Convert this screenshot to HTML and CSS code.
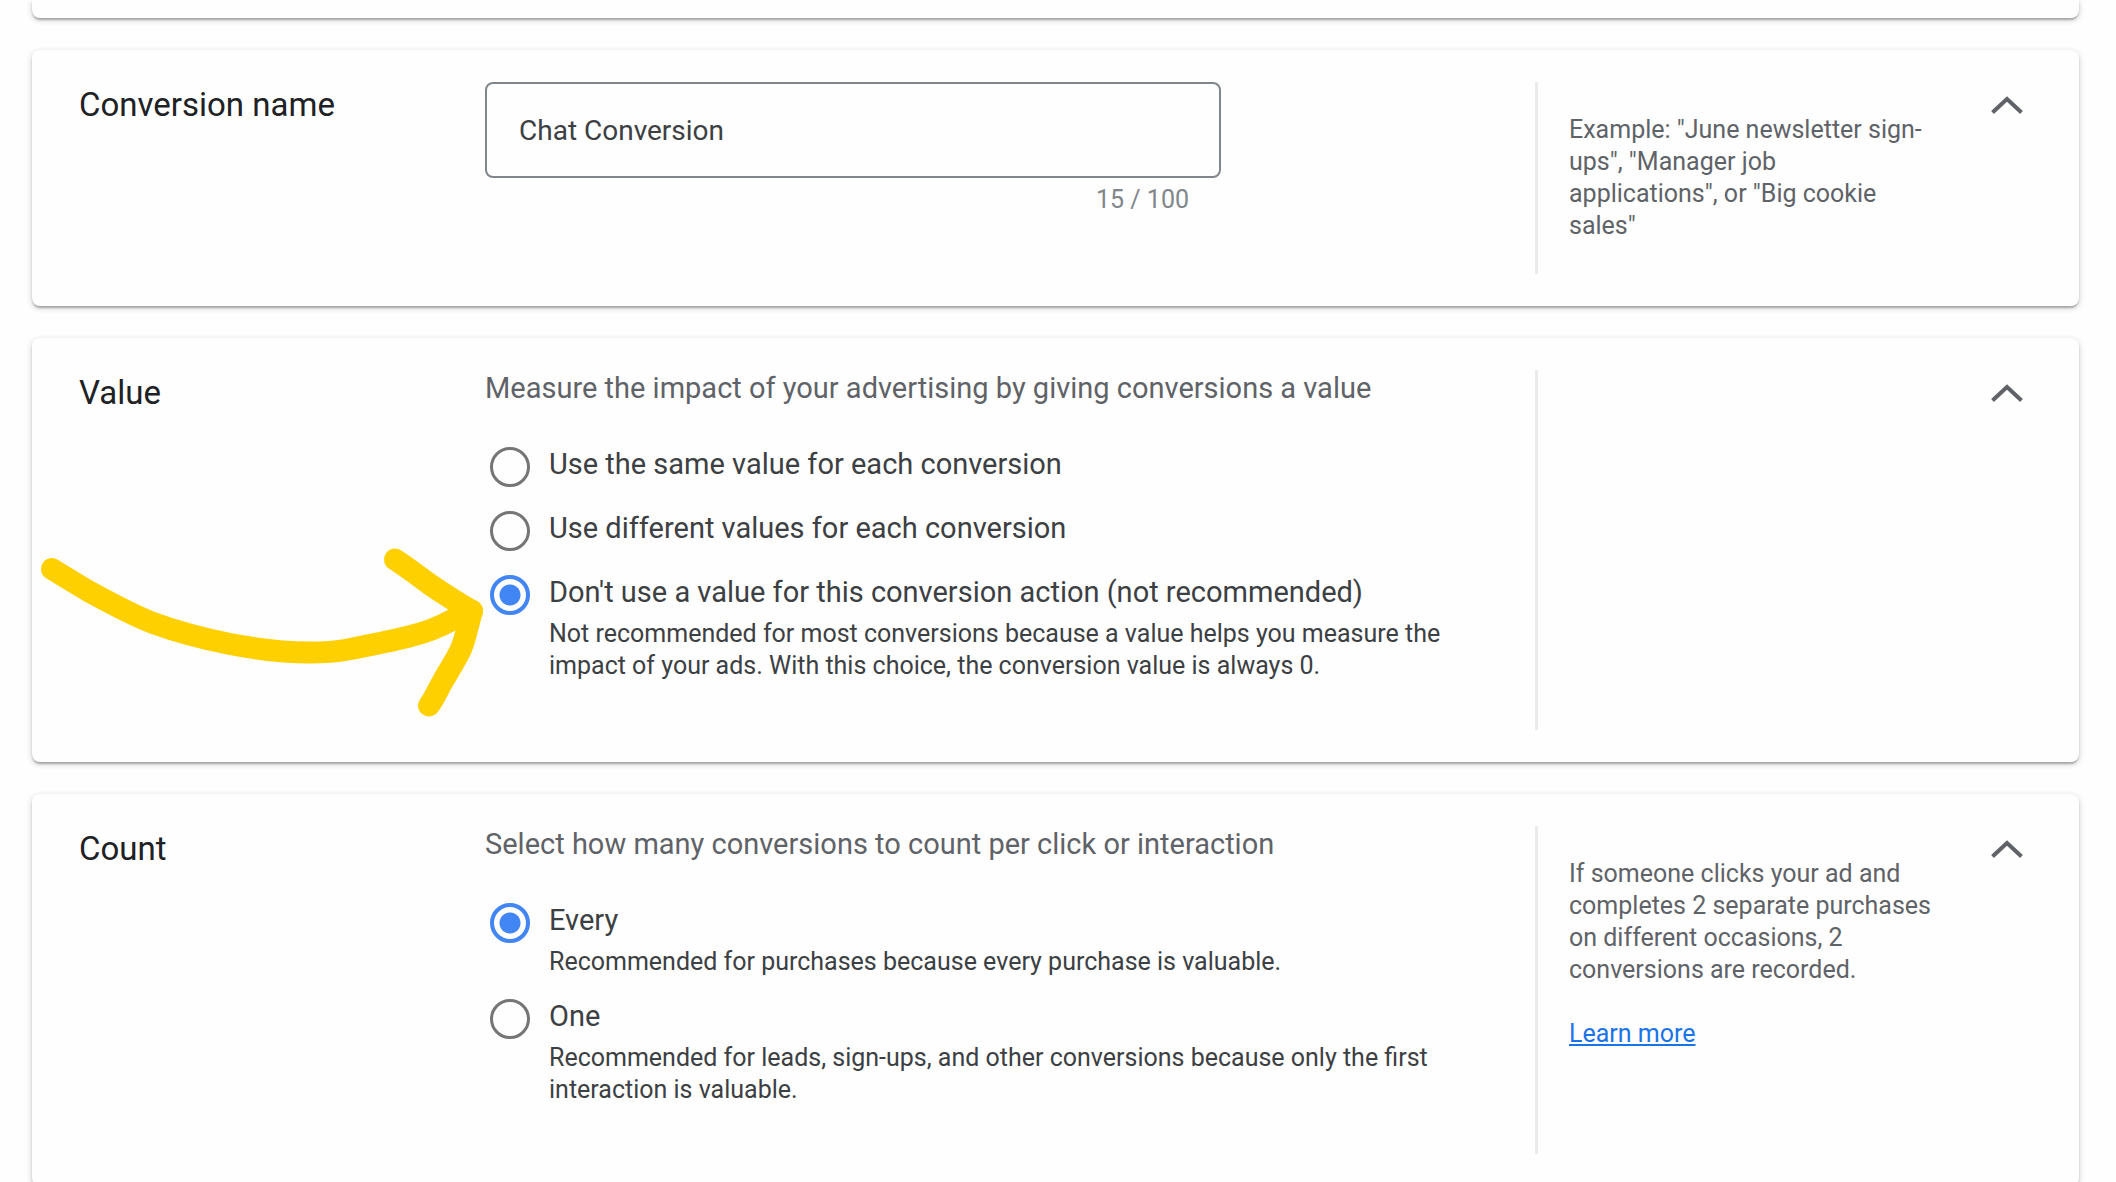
FILE: index.html
```html
<!DOCTYPE html>
<html lang="en">
<head>
    <meta charset="UTF-8">
    <meta name="viewport" content="width=device-width, initial-scale=1.0">
    <title>Conversion action settings</title>
    <link rel="stylesheet" href="styles.css">
</head>
<body>
    <main class="settings">
        <div class="card card-previous"></div>

        <!-- Conversion name -->
        <section class="card">
            <h2 class="card-title"><label for="conversionName">Conversion name</label></h2>
            <div class="card-body">
                <div class="name-field">
                    <input type="text" id="conversionName" class="name-input" value="Chat Conversion" maxlength="100">
                    <span class="name-counter">15 / 100</span>
                </div>
            </div>
            <aside class="card-aside">
                <p class="help-text">Example: "June newsletter sign-ups", "Manager job<br>applications", or "Big cookie<br>sales"</p>
                <button type="button" class="collapse-button" aria-label="Collapse">
                    <svg class="chevron" viewBox="0 0 48 48"><polyline points="9.5,30.5 24,17 38.5,30.5"/></svg>
                </button>
            </aside>
        </section>

        <!-- Value -->
        <section class="card">
            <h2 class="card-title">Value</h2>
            <div class="card-body">
                <p class="card-intro">Measure the impact of your advertising by giving conversions a value</p>
                <div class="options">
                    <label class="option">
                        <input type="radio" name="value" class="option-radio">
                        <span class="option-label">Use the same value for each conversion</span>
                    </label>
                    <label class="option">
                        <input type="radio" name="value" class="option-radio">
                        <span class="option-label">Use different values for each conversion</span>
                    </label>
                    <label class="option">
                        <input type="radio" name="value" class="option-radio" checked>
                        <span class="option-text">
                            <span class="option-label">Don't use a value for this conversion action (not recommended)</span>
                            <span class="option-hint">Not recommended for most conversions because a value helps you measure the impact of your ads. With this choice, the conversion value is always 0.</span>
                        </span>
                    </label>
                </div>
            </div>
            <aside class="card-aside">
                <p class="help-text"></p>
                <button type="button" class="collapse-button" aria-label="Collapse">
                    <svg class="chevron" viewBox="0 0 48 48"><polyline points="9.5,30.5 24,17 38.5,30.5"/></svg>
                </button>
            </aside>
            <svg class="arrow" viewBox="40 540 450 180" aria-hidden="true">
                <path d="M52 569 C65 577 78 585 90 592 C112 604 132 615 153 623 C178 632 204 639 230 644 C256 649 284 652.500 310 652.500 C322 652.500 334 652 345 650 C366 646 387 642 407 637 C424 633 438 628 452 620 C458 617 465 614 472 611"/>
                <path d="M395 559.500 C407 567 418 576 430 584.500 C444 594 458 603 472 611"/>
                <path d="M472 611 C468 624 466 637 461 649 C456 660 449 670 443 681 C438 689 435 698 429 705.500"/>
            </svg>
        </section>

        <!-- Count -->
        <section class="card">
            <h2 class="card-title">Count</h2>
            <div class="card-body">
                <p class="card-intro">Select how many conversions to count per click or interaction</p>
                <div class="options">
                    <label class="option">
                        <input type="radio" name="count" class="option-radio" checked>
                        <span class="option-text">
                            <span class="option-label">Every</span>
                            <span class="option-hint">Recommended for purchases because every purchase is valuable.</span>
                        </span>
                    </label>
                    <label class="option">
                        <input type="radio" name="count" class="option-radio">
                        <span class="option-text">
                            <span class="option-label">One</span>
                            <span class="option-hint">Recommended for leads, sign-ups, and other conversions because only the first interaction is valuable.</span>
                        </span>
                    </label>
                </div>
            </div>
            <aside class="card-aside">
                <div class="help-text">
                    <p>If someone clicks your ad and completes 2 separate purchases on different occasions, 2 conversions are recorded.</p>
                    <a href="#" class="help-link">Learn more</a>
                </div>
                <button type="button" class="collapse-button" aria-label="Collapse">
                    <svg class="chevron" viewBox="0 0 48 48"><polyline points="9.5,30.5 24,17 38.5,30.5"/></svg>
                </button>
            </aside>
        </section>
    </main>

    <script>
        const nameInput = document.getElementById('conversionName');
        const counter = document.querySelector('.name-counter');

        nameInput.addEventListener('input', () => {
            counter.textContent = `${nameInput.value.length} / 100`;
        });
    </script>
</body>
</html>
```
FILE: styles.css
```css
* { box-sizing: border-box; }

body {
    margin: 0;
    background: #fefefe;
    color: #3c4043;
    font-family: Roboto, "Liberation Sans", sans-serif;
    font-size: 29px;
    line-height: 36px;
}

h2, p { margin: 0; }

.settings {
    display: flex;
    flex-direction: column;
    gap: 32px;
    padding: 0 37px 0 32px;
}

/* Cards */
.card {
    position: relative;
    display: grid;
    grid-template-columns: 406px 1fr 544px;
    padding: 32px 0 32px 47px;
    border-radius: 8px;
    background: #fefefe;
    box-shadow: 0 2px 2px rgba(0, 0, 0, 0.14), 0 4px 2px -2px rgba(0, 0, 0, 0.12), 0 2px 6px rgba(0, 0, 0, 0.2);
}

/* End of the card above, scrolled out of view */
.card-previous {
    height: 18px;
    padding: 0;
    border-radius: 0 0 8px 8px;
}

.card-title {
    font-size: 33px;
    font-weight: 400;
    line-height: 46px;
    color: #202124;
}

.card-body { padding: 0 64px 48px 0; }

.card-intro {
    margin-bottom: 32px;
    color: #5f6368;
}

.card-aside {
    display: flex;
    justify-content: space-between;
    align-items: flex-start;
    padding: 0 48px 0 31px;
    border-left: 3px solid #ebebeb;
}

/* Conversion name */
.name-field {
    display: flex;
    flex-direction: column;
    max-width: 736px;
}

.name-input {
    height: 96px;
    padding: 0 32px;
    border: 2px solid #80868b;
    border-radius: 8px;
    background: transparent;
    color: #3c4043;
    font-family: inherit;
    font-size: 28px;
}

.name-counter {
    align-self: flex-end;
    padding-right: 32px;
    font-size: 25px;
    line-height: 44px;
    color: #80868b;
}

/* Radio options */
.options {
    display: flex;
    flex-direction: column;
    gap: 12px;
}

.option {
    display: flex;
    align-items: flex-start;
    gap: 19px;
    padding-left: 5px;
    cursor: pointer;
}

.option-radio {
    appearance: none;
    flex: none;
    width: 40px;
    height: 40px;
    margin: 9px 0 0;
    border: 3px solid #757575;
    border-radius: 50%;
}

.option-radio:checked {
    border: 4px solid #4285f4;
    background: radial-gradient(circle, #4285f4 10px, transparent 11px);
}

.option-label {
    display: block;
    line-height: 52px;
}

.option-hint {
    display: block;
    font-size: 25px;
    line-height: 32px;
}

/* Help column */
.help-text {
    max-width: 376px;
    padding: 32px 0;
    font-size: 25px;
    line-height: 32px;
    color: #5f6368;
}

.help-link {
    display: inline-block;
    margin-top: 32px;
    color: #1a73e8;
    text-decoration: underline;
}

.collapse-button {
    width: 48px;
    height: 48px;
    padding: 0;
    border: none;
    background: none;
    cursor: pointer;
}

.chevron {
    display: block;
    fill: none;
    stroke: #5f6368;
    stroke-width: 4;
}

/* Hand-drawn arrow over the Value card */
.arrow {
    position: absolute;
    top: 202px;
    left: 8px;
    width: 450px;
    height: 180px;
    fill: none;
    stroke: #ffd000;
    stroke-width: 22;
    stroke-linecap: round;
    stroke-linejoin: round;
    pointer-events: none;
}
```
